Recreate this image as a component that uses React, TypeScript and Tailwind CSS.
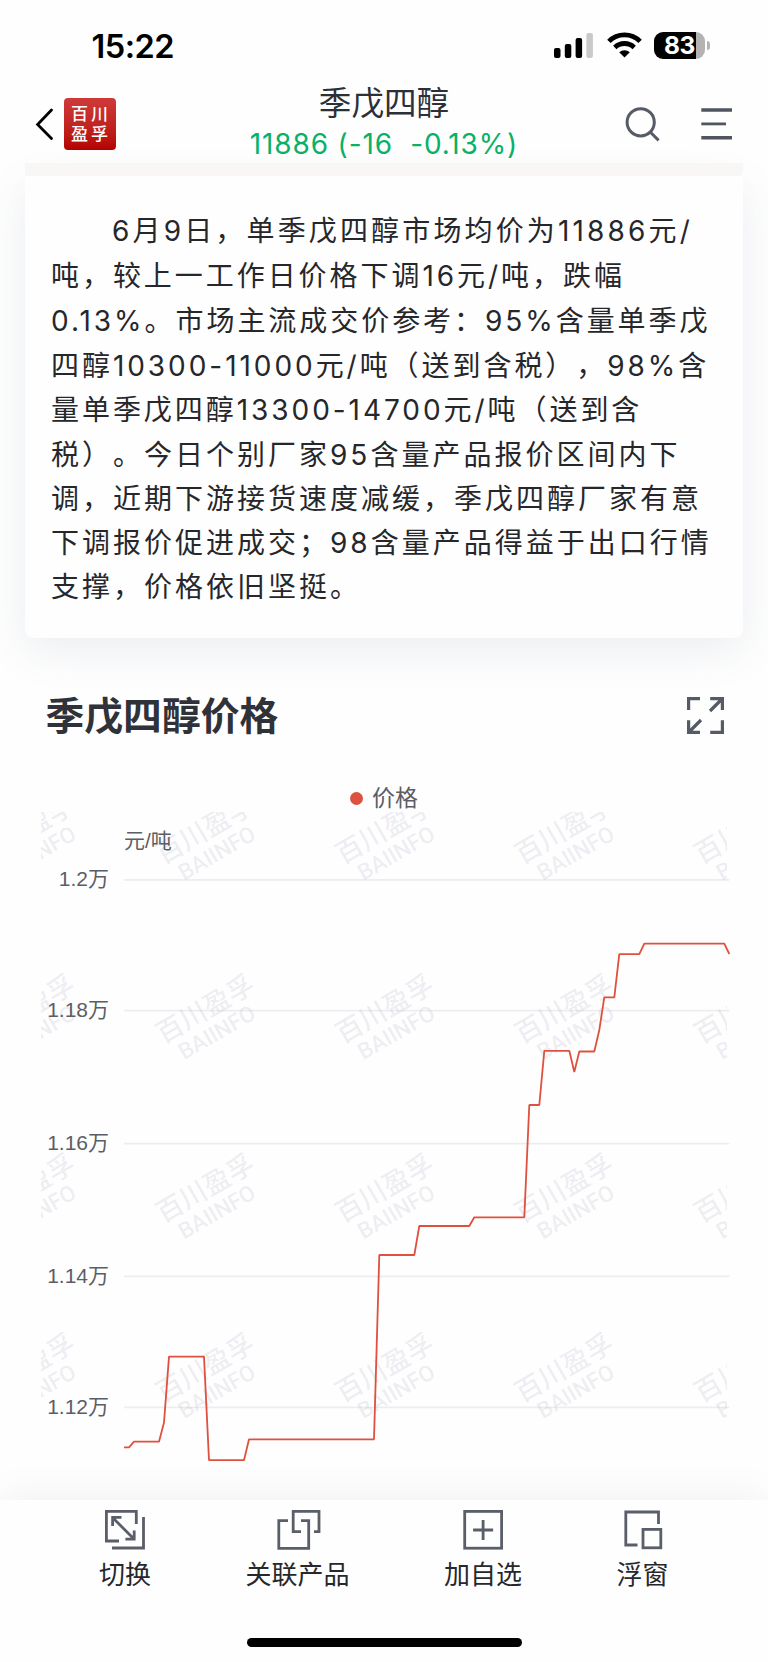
import type { ReactNode } from 'react';

interface Line {
  text: string;
  className: string;
}

const reportLines: Line[] = [
  { text: '6月9日，单季戊四醇市场均价为11886元/', className: 'h-[45px] pl-[61px] tracking-[3.15px]' },
  { text: '吨，较上一工作日价格下调16元/吨，跌幅', className: 'h-[45px] tracking-[2.95px]' },
  { text: '0.13%。市场主流成交价参考：95%含量单季戊', className: 'h-[45px] tracking-[2.95px]' },
  { text: '四醇10300-11000元/吨（送到含税），98%含', className: 'h-[45px] tracking-[2.95px]' },
  { text: '量单季戊四醇13300-14700元/吨（送到含', className: 'h-[44.5px] tracking-[2.95px]' },
  { text: '税）。今日个别厂家95含量产品报价区间内下', className: 'h-[44px] tracking-[3px]' },
  { text: '调，近期下游接货速度减缓，季戊四醇厂家有意', className: 'h-[44px] tracking-[3px]' },
  { text: '下调报价促进成交；98含量产品得益于出口行情', className: 'h-[44px] tracking-[3px]' },
  { text: '支撑，价格依旧坚挺。', className: 'h-[44px] tracking-[3px]' },
];

const yTicks = [
  { label: '1.2万', y: 79.8 },
  { label: '1.18万', y: 210.6 },
  { label: '1.16万', y: 343.6 },
  { label: '1.14万', y: 476.3 },
  { label: '1.12万', y: 607.3 },
];

const pricePoints: [number, number][] = [
  [124, 647.3], [129, 647.3], [134, 641.7], [159, 641.7], [164, 622.5], [169, 556.6],
  [204, 556.6], [209, 660.2], [244, 660.2], [249, 639.3], [374, 639.3], [379.3, 455],
  [414.3, 455], [419.3, 426], [469.3, 426], [474.3, 417.3], [524.3, 417.3], [529.3, 305],
  [539.3, 305], [544.3, 250.8], [569.3, 250.8], [574.3, 272], [579.3, 251.5], [594.3, 251.5],
  [599.3, 230], [604.3, 197.3], [614.3, 197.3], [619.3, 154.2], [639.3, 154.2], [644.3, 143.7],
  [724.3, 143.7], [729.3, 154],
];

const markColumns = [-10, 169.5, 348.9, 528.3, 707.7];
const markRows = [50, 229.4, 408.8, 588.2];

function StatusBar() {
  return (
    <div className="flex h-[88px] items-start justify-between pl-[91.5px] pr-[58px] text-black">
      <div className="mt-[27px] text-[32.5px] leading-[40px] font-semibold tracking-[-0.5px]">15:22</div>
      <div className="mt-[32px] flex h-[27px] items-start">
        <svg className="h-[27px] w-[40px]" viewBox="0 0 40 27">
          <rect x="0" y="16" width="6.5" height="10" rx="2" />
          <rect x="10.8" y="12" width="6.5" height="14" rx="2" />
          <rect x="21.6" y="6" width="6.5" height="20" rx="2" />
          <rect x="32.4" y="1" width="6.5" height="25" rx="2" fill="#c9c9c9" />
        </svg>
        <svg className="ml-[12.5px] h-[27px] w-[35px]" viewBox="0 0 35 27" fill="none" stroke="#000" strokeWidth="4.8">
          <path d="M1.9 9.4a22 22 0 0 1 31.2 0" />
          <path d="M7.8 15.4a14 14 0 0 1 19.4 0" />
          <path d="M17.5 25.5l-5.3-5.2a7.8 7.8 0 0 1 10.6 0z" fill="#000" stroke="none" />
        </svg>
        <div className="ml-[12.5px] flex h-[27px] w-[51px] items-center justify-center rounded-[9px] bg-[linear-gradient(to_right,#000_42px,#b3b3b3_42px)] text-[24.5px] leading-[27px] font-bold tracking-[-0.3px] text-white">
          83
        </div>
        <div className="mt-[9px] ml-[1.5px] h-[9px] w-[3.5px] rounded-r-full bg-[#b3b3b3]" />
      </div>
    </div>
  );
}

function NavBar() {
  return (
    <div className="flex h-[75px] items-start">
      <div className="flex w-[230px] items-center pt-[10px] pl-[35px]">
        <svg className="h-[34px] w-[20px]" viewBox="0 0 20 34" fill="none" stroke="#000" strokeWidth="2.8" strokeLinecap="round">
          <path d="M16.5 3L2.6 17.5L16.5 31.5" strokeLinejoin="miter" />
        </svg>
        <div className="ml-[8.5px] grid h-[52px] w-[52px] grid-cols-2 content-center justify-items-center rounded-[4px] bg-linear-to-b from-[#cf3a38] to-[#b40000] px-[6px] text-[17px] leading-[20px] font-medium text-white">
          <span>百</span>
          <span>川</span>
          <span>盈</span>
          <span>孚</span>
        </div>
      </div>
      <div className="flex w-[308px] flex-col items-center">
        <div className="h-[35px] text-[32.6px] leading-[31px] text-[#2c3038]">季戊四醇</div>
        <div className="text-[28px] leading-[42px] tracking-[0.85px] whitespace-pre text-[#09b167]">11886 (-16  -0.13%)</div>
      </div>
      <div className="flex flex-1 items-center pt-[18px] pl-[86px]">
        <svg className="h-[38px] w-[38px]" viewBox="0 0 38 38" fill="none" stroke="#565b66" strokeWidth="3">
          <circle cx="16.7" cy="16.3" r="13.6" />
          <path d="M26.2 26L34.6 34.4" />
        </svg>
        <svg className="ml-[39px] h-[38px] w-[32px]" viewBox="0 0 32 38" stroke="#505560" strokeWidth="3.6">
          <path d="M0.3 4H31M0.3 31.8H31" />
          <path d="M0.3 17.9H25" strokeWidth="2.8" />
        </svg>
      </div>
    </div>
  );
}

function ReportCard() {
  return (
    <section className="mx-[25px] h-[462px] rounded-b-[8px] bg-[#fefeff] pt-[32px] pl-[26px] shadow-[0_12px_44px_rgba(70,85,120,0.1)]">
      {reportLines.map((line) => (
        <div
          key={line.text}
          className={`${line.className} flex items-center text-[28px] leading-none whitespace-nowrap text-[#26272b] [text-spacing-trim:space-all]`}
        >
          {line.text}
        </div>
      ))}
    </section>
  );
}

function ChartHeader() {
  return (
    <div className="flex h-[102px] items-start justify-between pr-[44.5px] pl-[45.5px] pt-[18px]">
      <h2 className="text-[38.8px] leading-[40px] font-bold text-[#2f3238]">季戊四醇价格</h2>
      <svg className="h-[38px] w-[38px]" viewBox="0 0 38 38" fill="none" stroke="#555a64" strokeWidth="3.2">
        <path d="M2.6 14V2.6H14" />
        <path d="M24.2 2.6H36.4V14M36 3L24 15" />
        <path d="M2.6 24.2V36.4H14M3 36L15 24" />
        <path d="M24.2 36.4H36.4V24.2" />
      </svg>
    </div>
  );
}

function PriceChart() {
  return (
    <svg className="block h-[700px] w-[768px]" viewBox="0 0 768 700">
      <defs>
        <clipPath id="plot">
          <rect x="41" y="12" width="686" height="688" />
        </clipPath>
      </defs>
      {yTicks.map((tick) => (
        <path key={tick.label} d={`M124 ${tick.y}H729.3`} stroke="#ededef" strokeWidth="1.7" />
      ))}
      <g clipPath="url(#plot)" fill="#5a5a82" fillOpacity="0.1" className="font-medium">
        {markRows.map((y) =>
          markColumns.map((x) => (
            <g key={`${x}-${y}`} transform={`translate(${x} ${y}) rotate(-30)`}>
              <text x="-13" y="9.5" fontSize="27">百川盈孚</text>
              <text x="-3" y="34" fontSize="22.5" textLength="85" className="font-['Roboto']">BAIINFO</text>
            </g>
          )),
        )}
      </g>
      <g fill="#5b5e66" fontSize="21" className="font-['Liberation_Sans','Noto_Sans_CJK_SC',sans-serif]">
        {yTicks.map((tick) => (
          <text key={tick.label} x="109" y={tick.y + 6.6} textAnchor="end">{tick.label}</text>
        ))}
        <text x="124" y="48">元/吨</text>
      </g>
      <polyline
        points={pricePoints.map((p) => p.join(',')).join(' ')}
        fill="none"
        stroke="#e0503f"
        strokeWidth="1.8"
        strokeLinejoin="bevel"
      />
    </svg>
  );
}

function TabItem({ label, children }: { label: string; children: ReactNode }) {
  return (
    <button className="flex flex-col items-center text-[26px] leading-[36px] text-[#26282c]">
      <svg className="-mx-2 h-[42px] w-[46px]" viewBox="0 0 46 42" fill="none" stroke="#5a5e68" strokeWidth="2.8">
        {children}
      </svg>
      <span className="mt-[7px] whitespace-nowrap">{label}</span>
    </button>
  );
}

function TabBar() {
  return (
    <nav className="relative flex h-[162px] flex-col items-center bg-[#fefefe] shadow-[0_-6px_36px_rgba(0,0,0,0.05)]">
      <div className="flex h-[138px] w-full items-start gap-[94.5px] pt-[8px] pl-[99px]">
        <TabItem label="切换">
          <path d="M17 33H4.4V3.4H34.3V16" />
          <path d="M10 40H41.5V9" />
          <path d="M10.5 9.5L32 31M19.5 9.3H10.6V18M23.4 31.2H32.2V22.5" />
        </TabItem>
        <TabItem label="关联产品">
          <path d="M13 12.6H3.8V40.3H33.7V12.6H26" />
          <path d="M26 23.7H18.2V3.4H44V23.7H39" />
        </TabItem>
        <TabItem label="加自选">
          <rect x="4.7" y="3.4" width="36.9" height="36.8" />
          <path d="M23.1 12V32M13.1 22H33.1" />
        </TabItem>
        <TabItem label="浮窗">
          <path d="M17.5 37H5.8V4H38.5V16" />
          <rect x="23" y="21.4" width="17.8" height="18.4" />
        </TabItem>
      </div>
      <div className="h-[9px] w-[275px] rounded-full bg-black" />
    </nav>
  );
}

export default function App() {
  return (
    <div className="h-[1662px] w-[768px] overflow-hidden bg-[#fefefe] font-['Inter','Noto_Sans_CJK_SC',sans-serif]" lang="zh-CN">
      <header className="relative">
        <StatusBar />
        <NavBar />
        <div className="mx-[25px] h-[13px] rounded-br-[6px] bg-[#f9f7f5]" />
      </header>
      <ReportCard />
      <div className="pt-[40px]">
        <ChartHeader />
        <div className="flex h-[38px] items-center justify-center pb-[2px]">
          <span className="mr-[9px] h-[13px] w-[13px] rounded-full bg-[#dc5240]" />
          <span className="text-[23px] leading-none text-[#5b5e66]">价格</span>
        </div>
      </div>
      <div className="-mt-[18px]">
        <PriceChart />
      </div>
      <TabBar />
    </div>
  );
}
